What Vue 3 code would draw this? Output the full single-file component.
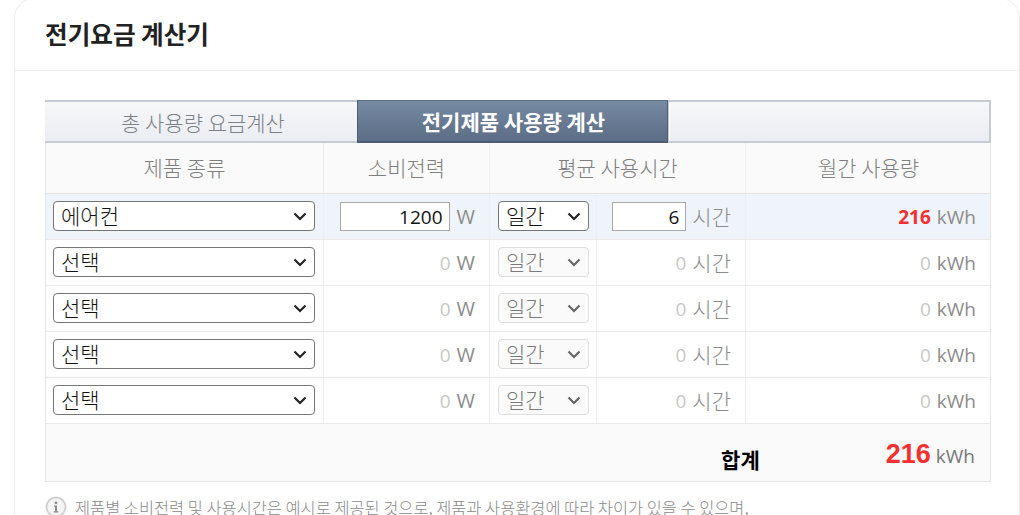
<script setup>
const rows = [
  { name: '에어컨', watt: 1200, hours: 6, usage: 216, active: true },
  { name: '선택', watt: 0, hours: 0, usage: 0 },
  { name: '선택', watt: 0, hours: 0, usage: 0 },
  { name: '선택', watt: 0, hours: 0, usage: 0 },
  { name: '선택', watt: 0, hours: 0, usage: 0 },
]
</script>

<template>
  <div class="card">
    <header class="card-head"><h1>전기요금 계산기</h1></header>
    <div class="body">
      <div class="tabs">
        <div class="tab first">총 사용량 요금계산</div>
        <div class="tab on">전기제품 사용량 계산</div>
        <div class="tab rest"></div>
      </div>
      <div class="calc">
        <div class="row head">
          <div class="cell">제품 종류</div>
          <div class="cell">소비전력</div>
          <div class="cell span">평균 사용시간</div>
          <div class="cell">월간 사용량</div>
        </div>
        <div v-for="(r, i) in rows" :key="i" class="row item" :class="{ active: r.active }">
          <div class="cell name">
            <select class="sel wide"><option>{{ r.name }}</option></select>
          </div>
          <div class="cell end">
            <input v-if="r.active" class="num watt" :value="r.watt" />
            <span v-else class="zero">{{ r.watt }}</span>
            <span class="unit w">W</span>
          </div>
          <div class="cell period">
            <select class="sel short" :disabled="!r.active"><option>일간</option></select>
          </div>
          <div class="cell end hours">
            <input v-if="r.active" class="num hr" :value="r.hours" />
            <span v-else class="zero">{{ r.hours }}</span>
            <span class="unit">시간</span>
          </div>
          <div class="cell end usage">
            <b v-if="r.active" class="red">{{ r.usage }}</b>
            <span v-else class="zero">{{ r.usage }}</span>
            <span class="unit">kWh</span>
          </div>
        </div>
        <div class="total">
          <strong class="label">합계</strong>
          <div class="sum"><b>216</b><span>kWh</span></div>
        </div>
      </div>
      <p class="note">
        <svg class="info" width="22" height="22" viewBox="0 0 22 22">
          <circle cx="11" cy="11" r="9.5" fill="#f4f4f4" stroke="#d2d2d2" stroke-width="2" />
          <path d="M9 9.4h3v5.8h1.4v1.3H8.7v-1.3h1.3v-4.5H9z" fill="#8a8a8a" />
          <circle cx="11" cy="6.8" r="1.4" fill="#8a8a8a" />
        </svg>
        <span>제품별 소비전력 및 사용시간은 예시로 제공된 것으로, 제품과 사용환경에 따라 차이가 있을 수 있으며,</span>
      </p>
    </div>
  </div>
</template>

<style>
html, body { margin: 0; height: 515px; overflow: hidden; background: #fff; }
</style>

<style scoped>
.card {
  box-sizing: border-box;
  width: 1006px;
  margin: -2px 0 0 14px;
  height: 560px;
  border: 1px solid #eeeeee;
  border-radius: 20px;
  background: #fff;
  font-family: "Noto Sans CJK KR", "Noto Sans", sans-serif;
}
.card-head {
  box-sizing: border-box;
  height: 72px;
  padding-left: 30px;
  padding-bottom: 4px;
  display: flex;
  align-items: center;
  border-bottom: 1px solid #eeeeee;
}
h1 { margin: 0; font-size: 24.6px; font-weight: 700; color: #222; line-height: 30px; }
.body { padding: 29px 0 0 30px; width: 946px; }
.tabs { display: grid; grid-template-columns: 312px 311px 323px; height: 43px; }
.tab {
  box-sizing: border-box;
  display: flex; align-items: center; justify-content: center;
  font-size: 21px; font-weight: 300; color: #7b828b;
  background: linear-gradient(#f6f7f9, #eaedf2);
  border-top: 2px solid #c6cbd1;
  border-bottom: 2px solid #c6cbd1;
}
.tab.first { padding-left: 4px; }
.tab.on {
  color: #fff; font-weight: 700;
  padding-left: 2px;
  background: linear-gradient(#768aa3, #5c6d85);
  border: 1px solid #4d5c72;
  border-bottom-width: 2px;
  border-top-color: #5f6f86;
}
.tab.rest { border: 2px solid #c6cbd1; border-left-width: 1px; box-shadow: inset 1px 0 0 #fff; }
.calc { border: 1px solid #e6e6e6; border-top: 0; box-sizing: border-box; }
.row { display: grid; grid-template-columns: 278px 166px 107px 149px 245px; border-bottom: 1px solid #e9e9e9; }
.head { height: 51px; box-sizing: border-box; background: #fafafa; grid-template-columns: 278px 166px 256px 245px; border-bottom-color: #e4e4e4; }
.head .cell { padding-bottom: 2px; }
.cell {
  box-sizing: border-box;
  display: flex; align-items: center; justify-content: center;
  border-right: 1px solid #efefef;
  font-size: 21px; font-weight: 300; color: #7f7f7f;
  min-width: 0;
}
.cell:last-child { border-right: 0; }
.item { height: 46px; box-sizing: border-box; }
.item.active { background: #eff3fa; }
.name { justify-content: flex-start; padding: 0 0 1px 7px; }
.period { justify-content: flex-start; padding: 0 0 1px 8px; }
.end { justify-content: flex-end; padding-right: 14px; gap: 6px; }
.usage { padding-right: 15px; }
.sel {
  appearance: none;
  box-sizing: border-box; height: 30px; font-size: 21px; font-weight: 300; line-height: 26px; padding: 0 3px 2px 7px;
  font-family: "Noto Sans CJK KR", sans-serif;
  color: #111; border: 1px solid #767676; border-radius: 4px;
  background: #fff url("data:image/svg+xml,%3Csvg xmlns='http://www.w3.org/2000/svg' width='14' height='9'%3E%3Cpath d='M1.5 1.5 7 7l5.5-5.5' fill='none' stroke='%23222' stroke-width='2.2'/%3E%3C/svg%3E") no-repeat right 7px center;
}
.sel:disabled {
  color: #7a7a7a; border-color: #dedede; opacity: 1;
  background: #fafafa url("data:image/svg+xml,%3Csvg xmlns='http://www.w3.org/2000/svg' width='14' height='9'%3E%3Cpath d='M1.5 1.5 7 7l5.5-5.5' fill='none' stroke='%23666' stroke-width='2.2'/%3E%3C/svg%3E") no-repeat right 7px center;
}
.wide { width: 262px; }
.short { width: 91px; }
.num {
  box-sizing: border-box; height: 29px; text-align: right; padding: 0 6px 0 0;
  font: 19px "Open Sans", sans-serif; color: #111;
  border: 1px solid #a9a9a9; background: #fff; border-radius: 0; outline: 0;
}
.watt { width: 110px; margin-right: 1px; }
.hr { width: 74px; }
.zero { font: 19px "Open Sans", sans-serif; color: #c8c8c8; }
.unit { font: 19px "Open Sans", sans-serif; color: #8c8c8c; }
.unit.w { font-size: 20px; }
.hours .unit { font: 300 21px "Noto Sans CJK KR", sans-serif; margin-bottom: 2px; }
.red { font: 700 19px "Open Sans", sans-serif; color: #f43030; }
.total {
  box-sizing: border-box; height: 57px; background: #fafafa;
  display: flex; align-items: center; justify-content: flex-end;
  padding: 4px 15px 0 0;
}
.label { font-size: 21px; color: #000; font-weight: 700; margin-right: 126px; position: relative; top: 4px; }
.sum { display: flex; align-items: baseline; gap: 5px; }
.sum b { font: 700 27px "Liberation Sans", sans-serif; color: #f43030; }
.sum span { font: 19px "Open Sans", sans-serif; color: #777; }
.note { margin: 13px 0 0; display: flex; gap: 8px; align-items: flex-start; font-size: 16.4px; font-weight: 300; line-height: 24px; color: #8a8a8a; white-space: nowrap; }
.info { flex: none; margin-top: 1px; }
</style>
